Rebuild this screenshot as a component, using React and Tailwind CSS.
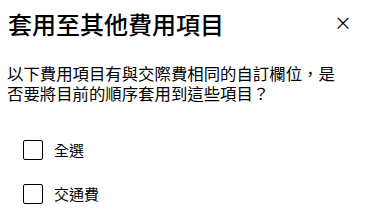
export default function App() {
  return (
    <div className="w-[370px] h-[223px] bg-white text-black overflow-hidden" style={{ fontFamily: '"Noto Sans CJK TC", "Noto Sans", sans-serif' }}>
      <div className="flex items-start justify-between pl-[8px] pr-[20px] pt-[8px]">
        <h1 className="text-[24px] leading-[32px] font-medium">套用至其他費用項目</h1>
        <button className="mt-[4px] mr-[-2px] text-[18px] leading-[20px]">×</button>
      </div>
      <p className="mt-[23px] ml-[7px] w-[340px] text-[16.4px] leading-[20px]">以下費用項目有與交際費相同的自訂欄位，是<br />否要將目前的順序套用到這些項目？</p>
      <div className="mt-[37px] pl-[23px] flex flex-col gap-[24px]">
        <label className="flex items-center gap-[11px]">
          <span className="w-[20px] h-[20px] border border-black rounded-[2px]"></span>
          <span className="text-[15px] leading-[20px]">全選</span>
        </label>
        <label className="flex items-center gap-[11px]">
          <span className="w-[20px] h-[20px] border border-black rounded-[2px]"></span>
          <span className="text-[15px] leading-[20px]">交通費</span>
        </label>
      </div>
    </div>
  );
}
